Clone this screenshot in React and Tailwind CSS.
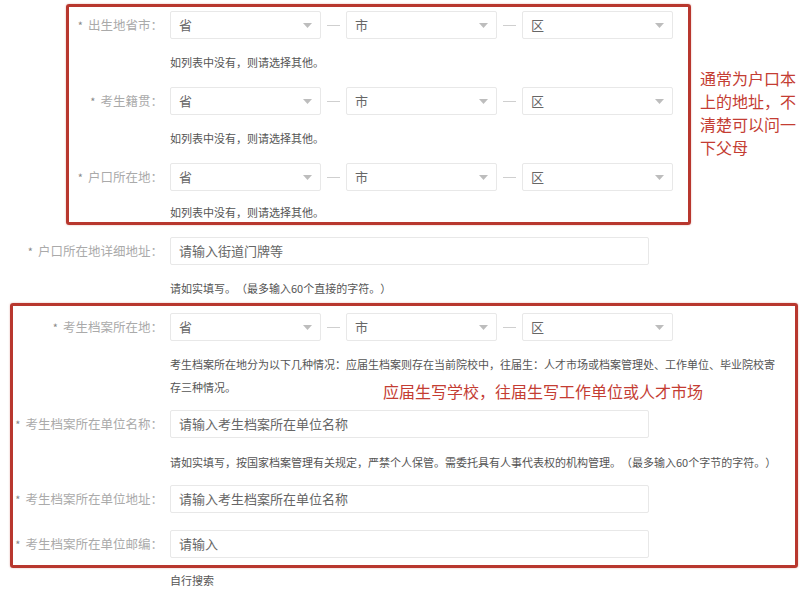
import React from 'react';

const font = { fontFamily: '"Noto Sans CJK SC", "Noto Sans", sans-serif' };

function Arrow() {
  return (
    <svg width="9" height="5" viewBox="0 0 9 5" className="shrink-0">
      <path d="M0 0h9L4.5 5z" fill="#bdbdbd" />
    </svg>
  );
}

function Select({ text }) {
  return (
    <div className="flex h-[28px] w-[151px] items-center justify-between rounded-[2px] border border-[#e8e8e8] bg-white pl-[8px] pr-[8px] text-[13px] text-[#666]">
      <span>{text}</span>
      <Arrow />
    </div>
  );
}

function Dash() {
  return (
    <div className="flex w-[25px] justify-center">
      <div className="h-px w-[13px] bg-[#cfcfcf]" />
    </div>
  );
}

function Label({ text, width }) {
  return (
    <div
      className="flex h-[28px] shrink-0 items-center justify-end whitespace-nowrap pr-[7px] text-[12.5px] text-[#aaa]"
      style={{ width }}
    >
      <span className="mr-[5px] text-[11px] text-[#888]">*</span>
      {text}：
    </div>
  );
}

function AreaRow({ label, width }) {
  return (
    <div className="flex items-center">
      <Label text={label} width={width} />
      <Select text="省" />
      <Dash />
      <Select text="市" />
      <Dash />
      <Select text="区" />
    </div>
  );
}

function InputRow({ label, width, placeholder }) {
  return (
    <div className="flex items-center">
      <Label text={label} width={width} />
      <div className="flex h-[28px] w-[479px] items-center rounded-[2px] border border-[#e8e8e8] bg-white px-[8px] text-[13px] text-[#666]">
        {placeholder}
      </div>
    </div>
  );
}

function Help({ children, offset, className = '' }) {
  return (
    <div
      className={`text-[11px] text-[#555] ${className}`}
      style={{ paddingLeft: offset }}
    >
      {children}
    </div>
  );
}

export default function App() {
  const topW = 101;
  const botW = 157;
  return (
    <div className="min-h-[607px] w-[804px] overflow-hidden bg-white pt-[4px] [text-spacing-trim:space-all]" style={font}>
      {/* top annotated block */}
      <div className="flex items-start">
        <div className="ml-[66px] w-[625px] rounded-[3px] border-[3px] border-[#b8372e] pt-[4px] shadow-[0_0_2px_rgba(184,55,46,0.4)]">
          <AreaRow label="出生地省市" width={topW} />
          <Help offset={topW} className="pt-3 pb-[13px] leading-[23px]">如列表中没有，则请选择其他。</Help>
          <AreaRow label="考生籍贯" width={topW} />
          <Help offset={topW} className="pt-3 pb-[13px] leading-[23px]">如列表中没有，则请选择其他。</Help>
          <AreaRow label="户口所在地" width={topW} />
          <Help offset={topW} className="pt-[11px] leading-[20px]">如列表中没有，则请选择其他。</Help>
        </div>
        <div className="ml-[9px] mt-[63px] text-[16px] leading-[23px] text-[#c43d33]">
          <div>通常为户口本</div>
          <div>上的地址，不</div>
          <div>清楚可以问一</div>
          <div>下父母</div>
        </div>
      </div>

      <div className="mt-[12px] ml-[13px]">
        <InputRow label="户口所在地详细地址" width={botW} placeholder="请输入街道门牌等" />
        <Help offset={botW} className="pt-3 pb-[3px] leading-[23px]">请如实填写。（最多输入60个直接的字符。）</Help>
      </div>

      {/* bottom annotated block */}
      <div className="relative ml-[10px] w-[788px] rounded-[3px] border-[3px] border-[#b8372e] pt-[7px] pb-[7px] shadow-[0_0_2px_rgba(184,55,46,0.4)]">
        <AreaRow label="考生档案所在地" width={botW} />
        <Help offset={botW} className="pt-3 pb-[11px] pr-[12px] leading-[23px]">
          考生档案所在地分为以下几种情况：应届生档案则存在当前院校中，往届生：人才市场或档案管理处、工作单位、毕业院校寄存三种情况。
        </Help>
        <InputRow label="考生档案所在单位名称" width={botW} placeholder="请输入考生档案所在单位名称" />
        <Help offset={botW} className="pt-[13px] pb-[11px] leading-[23px]">
          请如实填写，按国家档案管理有关规定，严禁个人保管。需委托具有人事代表权的机构管理。（最多输入60个字节的字符。）
        </Help>
        <InputRow label="考生档案所在单位地址" width={botW} placeholder="请输入考生档案所在单位名称" />
        <div className="h-[17px]" />
        <InputRow label="考生档案所在单位邮编" width={botW} placeholder="请输入" />
        <div className="absolute left-[370px] top-[74px] whitespace-nowrap text-[16px] leading-[23px] text-[#c43d33]">
          应届生写学校，往届生写工作单位或人才市场
        </div>
      </div>

      <div className="ml-[170px] mt-[4px] text-[11px] leading-[16px] text-[#555]">自行搜索</div>
    </div>
  );
}
